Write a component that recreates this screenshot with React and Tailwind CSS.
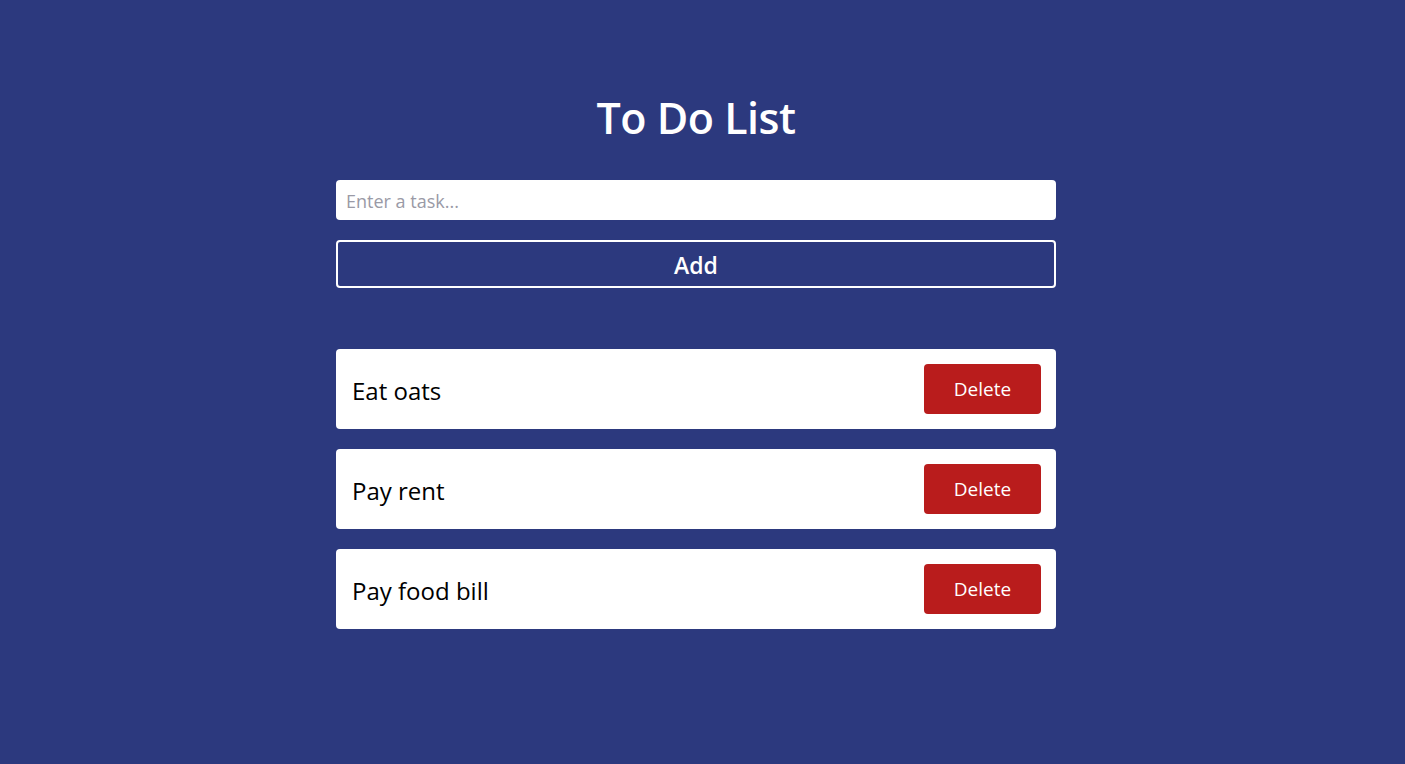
import { useState } from "react";

const INITIAL = ["Eat oats", "Pay rent", "Pay food bill"];

export default function App() {
  const [tasks, setTasks] = useState(INITIAL);
  const [text, setText] = useState("");

  const addTask = () => {
    const t = text.trim();
    if (!t) return;
    setTasks((prev) => [...prev, t]);
    setText("");
  };

  const removeTask = (index) => {
    setTasks((prev) => prev.filter((_, i) => i !== index));
  };

  return (
    <div
      className="min-h-screen bg-[#2c397e] pt-[93px] pr-[13px]"
      style={{ fontFamily: '"Open Sans", "Noto Sans", sans-serif' }}
    >
      <div className="mx-auto w-[720px]">
        <h1 className="text-center text-[43px] leading-[50px] font-semibold text-white tracking-[-0.5px]">
          To Do List
        </h1>

        <input
          value={text}
          onChange={(e) => setText(e.target.value)}
          placeholder="Enter a task..."
          className="mt-[37px] block h-10 w-full rounded bg-white px-[10px] pt-[2px] text-[18px] text-black outline-none placeholder:text-[#9a9aa6]"
        />

        <button
          type="button"
          onClick={addTask}
          className="mt-5 block h-12 w-full rounded border-2 border-white pt-[2px] text-[23px] font-semibold text-white"
        >
          Add
        </button>

        <ul className="mt-[61px] flex flex-col gap-5">
          {tasks.map((task, i) => (
            <li
              key={i}
              className="flex h-20 items-center justify-between rounded bg-white pl-4 pr-[15px]"
            >
              <span className="pt-1 text-[24px] font-[450] text-black">{task}</span>
              <button
                type="button"
                onClick={() => removeTask(i)}
                className="h-[50px] w-[117px] rounded bg-[#b91c1c] text-[19px] text-white"
              >
                Delete
              </button>
            </li>
          ))}
        </ul>
      </div>
    </div>
  );
}
